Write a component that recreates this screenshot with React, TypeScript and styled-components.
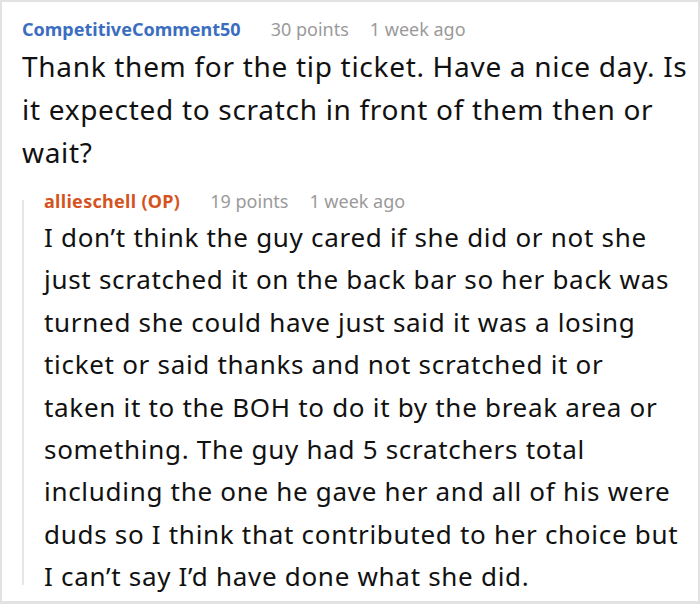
import React from 'react';
import styled, { createGlobalStyle } from 'styled-components';

const GlobalStyle = createGlobalStyle`
  html, body {
    margin: 0;
    padding: 0;
    background: #ffffff;
  }
  body {
    font-family: 'Noto Sans', 'Open Sans', sans-serif;
  }
`;

const Frame = styled.div`
  box-sizing: border-box;
  width: 700px;
  height: 604px;
  border: 2px solid #e2e2e2;
  border-bottom-width: 3px;
  padding: 12px 9px 0 20px;
  overflow: hidden;
`;

const Comment = styled.div``;

const Meta = styled.div`
  display: flex;
  align-items: baseline;
  height: 30px;
  line-height: 30px;
  white-space: nowrap;
`;

const Author = styled.span<{ $op?: boolean }>`
  font-weight: 700;
  font-size: 18px;
  letter-spacing: ${(p) => (p.$op ? '0.3px' : '0')};
  color: ${(p) => (p.$op ? '#d4541f' : '#3b6ec0')};
  margin-right: 30px;
`;

const Stat = styled.span`
  font-size: 18px;
  color: #9a9a9a;
  & + & {
    margin-left: 21px;
  }
`;

const Body = styled.p<{ $reply?: boolean }>`
  margin: ${(p) => (p.$reply ? '0' : '1px 0 0')};
  font-size: ${(p) => (p.$reply ? '26px' : '28px')};
  line-height: ${(p) => (p.$reply ? '42.4px' : '43px')};
  letter-spacing: ${(p) => (p.$reply ? '0.7px' : '0.7px')};
  color: #111;
`;

const Reply = styled.div`
  position: relative;
  margin-top: 12px;
  padding: 0 7px 0 22px;

  &::before {
    content: '';
    position: absolute;
    left: 0;
    top: 14px;
    bottom: 13px;
    width: 2px;
    background: #e6e6e6;
  }
`;

export default function App() {
  return (
    <>
      <GlobalStyle />
      <Frame>
        <Comment>
          <Meta>
            <Author>CompetitiveComment50</Author>
            <Stat>30 points</Stat>
            <Stat>1 week ago</Stat>
          </Meta>
          <Body>
            Thank them for the tip ticket. Have a nice day. Is it expected to scratch in front of
            them then or wait?
          </Body>
        </Comment>
        <Reply>
          <Meta>
            <Author $op>allieschell (OP)</Author>
            <Stat>19 points</Stat>
            <Stat>1 week ago</Stat>
          </Meta>
          <Body $reply>
            I don’t think the guy cared if she did or not she just scratched it on the back bar so
            her back was turned she could have just said it was a losing ticket or said thanks and
            not scratched it or taken it to the BOH to do it by the break area or something. The guy
            had 5 scratchers total including the one he gave her and all of his were duds so I think
            that contributed to her choice but I can’t say I’d have done what she did.
          </Body>
        </Reply>
      </Frame>
    </>
  );
}
